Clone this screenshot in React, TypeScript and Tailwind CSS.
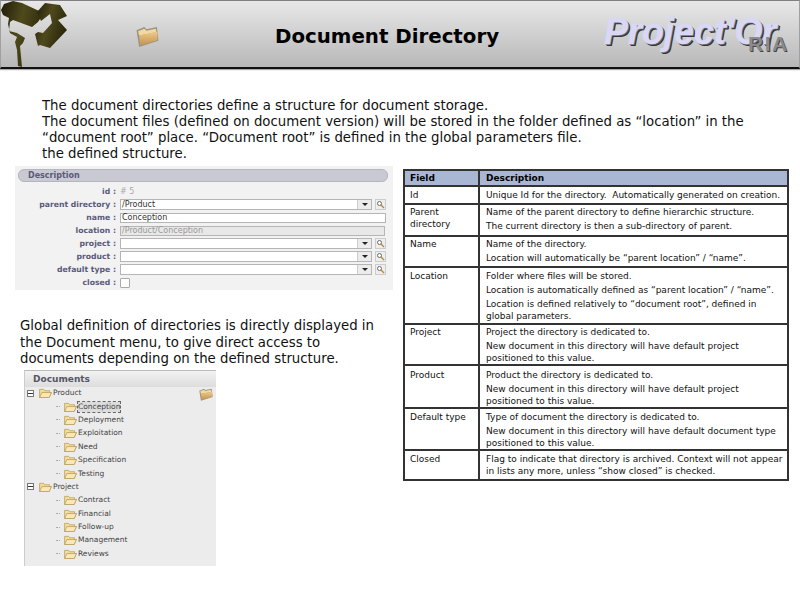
const rows: { f: string; d: string[]; h: number; t: number }[] = [
  { f: "Id", h: 18, t: 3, d: ["Unique Id for the directory.  Automatically generated on creation."] },
  { f: "Parent directory", h: 32, t: 2, d: ["Name of the parent directory to define hierarchic structure.", "The current directory is then a sub-directory of parent."] },
  { f: "Name", h: 31, t: 2, d: ["Name of the directory.", "Location will automatically be “parent location” / “name”."] },
  { f: "Location", h: 57, t: 3, d: ["Folder where files will be stored.", "Location is automatically defined as “parent location” / “name”.", "Location is defined relatively to “document root”, defined in global parameters."] },
  { f: "Project", h: 41, t: 2, d: ["Project the directory is dedicated to.", "New document in this directory will have default project positioned to this value."] },
  { f: "Product", h: 43, t: 4, d: ["Product the directory is dedicated to.", "New document in this directory will have default project positioned to this value."] },
  { f: "Default type", h: 42, t: 3, d: ["Type of document the directory is dedicated to.", "New document in this directory will have default document type positioned to this value."] },
  { f: "Closed", h: 28, t: 3, d: ["Flag to indicate that directory is archived. Context will not appear in lists any more, unless “show closed” is checked."] },
];

function Folder({ className = "" }: { className?: string }) {
  return (
    <svg viewBox="0 0 22 20" className={className}>
      <defs>
        <linearGradient id="fg" x1="0" y1="0" x2="0" y2="1">
          <stop offset="0" stopColor="#efc98a" />
          <stop offset="1" stopColor="#c4934e" />
        </linearGradient>
      </defs>
      <path d="M0.5 4 L8 1 L10 3 L20 1 L21.5 14 L3 20 Z" fill="#9c9482" />
      <path d="M2 5 L8 2.5 L10 4.5 L19 2.5 L19.5 6 L3 9 Z" fill="#f3d9a0" />
      <path d="M3 9 L20.5 5.5 L20.5 13.5 L4 18.5 Z" fill="url(#fg)" />
    </svg>
  );
}

function TreeFolder() {
  return (
    <svg viewBox="0 0 14 11" className="w-[13px] h-[10px] shrink-0">
      <path d="M0.5 1.5 H5 L6 3 H11.5 V5 H13.5 L11 10.5 H0.5 Z" fill="#f6dc96" stroke="#b59a5c" strokeWidth="0.8" />
      <path d="M3 5 H13.5 L11 10.5 H0.5 Z" fill="#f9e7b5" stroke="#b59a5c" strokeWidth="0.8" />
    </svg>
  );
}

function Field({ label, value, kind }: { label: string; value?: string; kind: "combo" | "text" | "ro" | "id" | "check" }) {
  return (
    <div className="flex items-center h-[13px]">
      <div className="w-[99px] text-right text-[7.7px] font-bold text-[#5a5a7a] pr-[1px] whitespace-nowrap">{label} :</div>
      <div className="flex-1 pl-[3px] flex items-center">
        {kind === "id" && <span className="text-[8px] text-[#aaaaaa]"># 5</span>}
        {kind === "check" && <div className="w-[10px] h-[10px] border border-[#aaaaaa] bg-white rounded-[1px]" />}
        {kind === "text" && <div className="w-[266px] h-[10px] border border-[#b5b5b5] bg-white text-[8px] leading-[8px] pl-[1px] text-[#333333]">{value}</div>}
        {kind === "ro" && <div className="w-[265px] h-[10px] border border-[#b5b5b5] bg-[#e8e8e8] text-[8px] leading-[8px] pl-[1px] text-[#999999]">{value}</div>}
        {kind === "combo" && (
          <>
            <div className="w-[252px] h-[11px] border border-[#b5b5b5] bg-white text-[8px] leading-[9px] pl-[1px] text-[#333333] flex justify-between">
              <span>{value}</span>
              <span className="w-[14px] bg-[#ececec] border-l border-[#cccccc] flex items-center justify-center">
                <span className="w-0 h-0 border-x-[3px] border-x-transparent border-t-[3px] border-t-[#222222]" />
              </span>
            </div>
            <div className="ml-[3px] w-[11px] h-[11px] border border-[#cccccc] bg-[#eeeeee] flex items-center justify-center">
              <svg viewBox="0 0 9 9" className="w-[9px] h-[9px]">
                <circle cx="3.5" cy="3.5" r="2" fill="#ffffff" stroke="#6a6a6a" />
                <path d="M5 5 L8 8" stroke="#c08a30" strokeWidth="1.4" />
              </svg>
            </div>
          </>
        )}
      </div>
    </div>
  );
}

function TreeRow({ label, active }: { label: string; active?: boolean }) {
  return (
    <div className="flex items-center h-[13.4px] pl-[31px]">
      <span className="w-[4px] h-0 border-t border-dotted border-[#aaaaaa] mr-[4px]" />
      <TreeFolder />
      <span className={"ml-[1px] text-[7.5px] leading-[10px] text-[#444444] " + (active ? "outline outline-1 outline-dashed outline-[#666666] bg-[#dcdcdc]" : "")}>{label}</span>
    </div>
  );
}

function TreeRoot({ label }: { label: string }) {
  return (
    <div className="flex items-center h-[13.4px] pl-[2px]">
      <span className="w-[7px] h-[7px] border border-[#777777] bg-white flex items-center justify-center mr-[5px]">
        <span className="w-[5px] h-[1px] bg-[#333333]" />
      </span>
      <TreeFolder />
      <span className="ml-[1px] text-[7.5px] leading-[10px] text-[#444444]">{label}</span>
    </div>
  );
}

export default function App() {
  return (
    <div className="w-[800px] h-[600px] bg-white overflow-hidden text-black font-['DejaVu_Sans',sans-serif]">
      <header className="relative h-[69px] border-t border-t-[#808080] border-x border-x-[#a0a0a0] border-b-[2px] border-b-[#111111] bg-gradient-to-b from-[#e8e8e8] to-[#b8b8b8] flex items-center shadow-[0_1px_1px_#aaaaaa]">
        <svg viewBox="0 0 68 68" className="absolute -left-px -top-px w-[68px] h-[68px]">
          <defs>
            <linearGradient id="lg" x1="0" y1="0" x2="1" y2="0.4">
              <stop offset="0" stopColor="#1f1a08" />
              <stop offset="0.5" stopColor="#4f4a1c" />
              <stop offset="1" stopColor="#2c280c" />
            </linearGradient>
          </defs>
          <path d="M1 10 L4 4 L13 1 L22 3 L37 10 L44 13 L38 22 L32 27 L13 20 L10 22 L9 31 L17 33 L25 38 L23 43 L20 46 L22 67 L18 66 L17 50 L15 42 L17 37 L10 33 L8 24 L9 18 L3 15 Z" fill="url(#lg)" />
          <path d="M37 12 L45 3 L60 5 L67 16 L58 20 L67 30 L50 48 L40 45 L38 46 L35 34 L38 32 L43 33 L52 23 L50 14 L41 21 Z" fill="url(#lg)" />
        </svg>
        <Folder className="absolute left-[135px] top-[25px] w-[23px] h-[21px]" />
        <h1 className="absolute left-[274px] top-[22px] text-[19.8px] leading-[28px] font-bold whitespace-nowrap">Document Directory</h1>
        <div className="absolute left-[603px] top-[9px] text-[36px] leading-[44px] italic font-bold text-[#d8d8f6] font-['Liberation_Sans',sans-serif] whitespace-nowrap [-webkit-text-stroke:0.4px_#d8d8f6] [text-shadow:1px_1px_0_#666666,2px_2px_0_#333333]">Project'Or</div>
        <div className="absolute left-[747px] top-[31px] text-[21px] leading-[24px] font-bold tracking-[1.5px] text-[#8a8a8a] font-['Liberation_Sans',sans-serif] [text-shadow:1px_1px_0_#444444] whitespace-nowrap">RIA</div>
      </header>

      <div className="pl-[42px] pt-[29px] text-[13.3px] leading-[16px] h-[97px] text-[#111111] w-[755px]">
        <p>The document directories define a structure for document storage.</p>
        <p>The document files (defined on document version) will be stored in the folder defined as “location” in the “document root” place. “Document root” is defined in the global parameters file.</p>
        <p>the defined structure.</p>
      </div>

      <div className="flex">
        <div className="w-[403px] shrink-0 pl-[15px]">
          <section className="w-[378px] h-[124px] bg-[#f2f2f2] pt-[3px] pl-[3px] pr-[5px]">
            <div className="h-[13px] rounded-[6px] border border-[#b5b5c0] bg-[#c9c9d2] text-[8px] leading-[12px] font-bold text-[#5a5a7a] pl-[9px]">Description</div>
            <div className="mt-[3px]">
              <Field label="id" kind="id" />
              <Field label="parent directory" value="/Product" kind="combo" />
              <Field label="name" value="Conception" kind="text" />
              <Field label="location" value="/Product/Conception" kind="ro" />
              <Field label="project" kind="combo" />
              <Field label="product" kind="combo" />
              <Field label="default type" kind="combo" />
              <Field label="closed" kind="check" />
            </div>
          </section>
          <p className="mt-[28px] ml-[5px] w-[365px] text-[13.3px] leading-[16.5px] text-[#111111]">
            Global definition of directories is directly displayed in the Document menu, to give direct access to documents depending on the defined structure.
          </p>
          <section className="relative mt-[2px] ml-[9px] w-[192px] h-[196px] bg-[#ececec] border-l border-[#cccccc] border-t border-t-[#bbbbbb]">
            <div className="h-[16px] bg-gradient-to-b from-[#f2f2f2] to-[#dddddd] text-[9px] leading-[16px] font-bold text-[#555566] pl-[8px]">Documents</div>
            <Folder className="absolute left-[174px] top-[17px] w-[14px] h-[13px]" />
            <div>
              <TreeRoot label="Product" />
              {["Conception", "Deployment", "Exploitation", "Need", "Specification", "Testing"].map((t, i) => (
                <TreeRow key={t} label={t} active={i === 0} />
              ))}
              <TreeRoot label="Project" />
              {["Contract", "Financial", "Follow-up", "Management", "Reviews"].map((t) => (
                <TreeRow key={t} label={t} />
              ))}
            </div>
          </section>
        </div>

        <div className="pt-[3px]">
          <div className="w-[386px] border-2 border-[#333333]">
            <div className="flex h-[16px] bg-[#a9b6d4] border-b-2 border-[#333333] text-[9px] font-bold leading-[14px]">
              <div className="w-[75px] pl-[5px] border-r-2 border-[#333333]">Field</div>
              <div className="pl-[6px]">Description</div>
            </div>
            {rows.map((r, i) => (
              <div key={r.f} style={{ height: r.h }} className={"flex text-[9px] leading-[11.5px] text-[#111111] " + (i < rows.length - 1 ? "border-b-2 border-[#333333]" : "")}>
                <div style={{ paddingTop: r.t }} className="w-[75px] shrink-0 pl-[5px] border-r-2 border-[#333333]">{r.f}</div>
                <div style={{ paddingTop: r.t }} className="pl-[6px] pr-[3px] flex flex-col gap-[2.5px]">
                  {r.d.map((t) => (
                    <div key={t} className="whitespace-pre-wrap">{t}</div>
                  ))}
                </div>
              </div>
            ))}
          </div>
        </div>
      </div>
    </div>
  );
}
